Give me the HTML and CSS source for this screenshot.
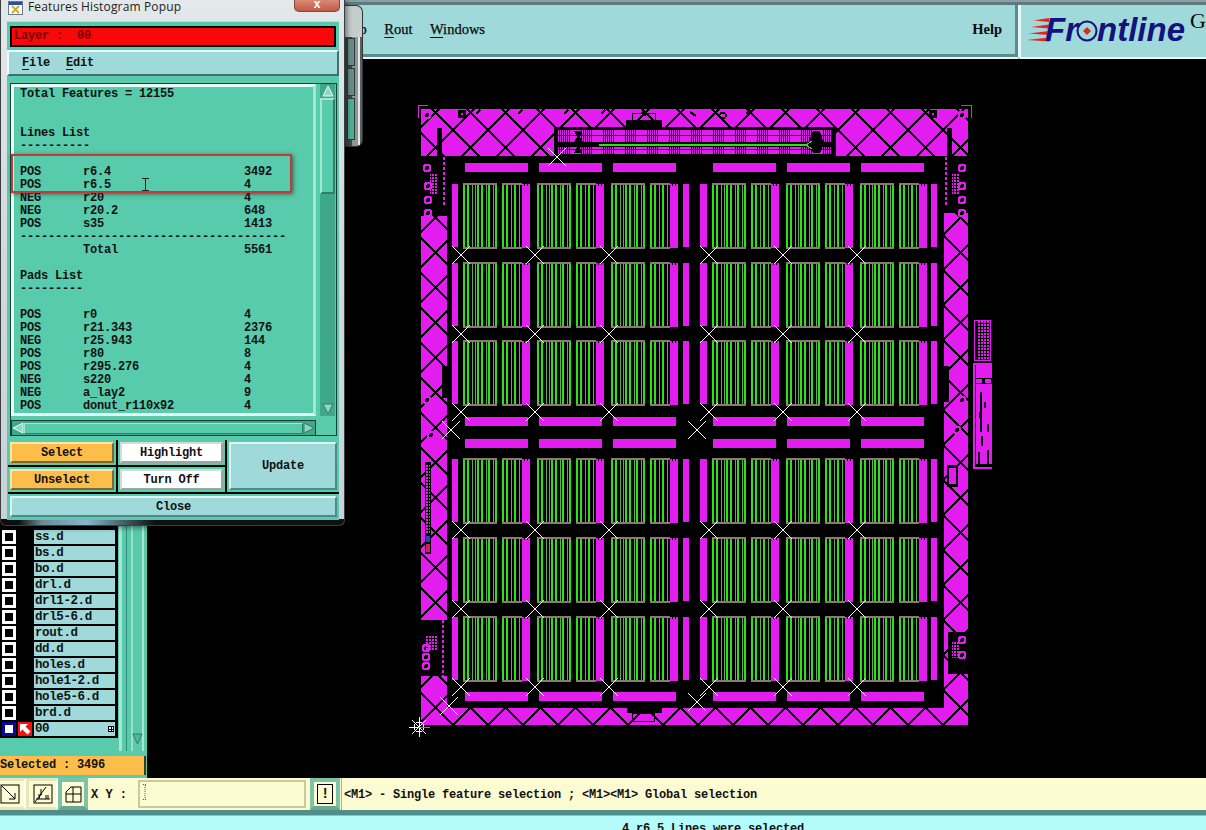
FILE: index.html
```html
<!DOCTYPE html>
<html lang="en">
<head>
<meta charset="utf-8">
<title>Features Histogram Popup</title>
<link rel="stylesheet" href="styles.css">
</head>
<body>
<div class="screen">
  <header class="top">
    <nav class="menu">
      <span class="menu-item"><u>S</u>tep</span>
      <span class="menu-item"><u>R</u>out</span>
      <span class="menu-item"><u>W</u>indows</span>
      <span class="menu-item help">Help</span>
    </nav>
    <div class="logo">
      <svg class="logo-stripes" width="22" height="24" viewBox="0 0 22 24"><path d="M22 0V4L7 2.500zM22 6.500V10.500L4 9zM22 13V17L2 15.500zM22 19.500V23.500L0 22z"/></svg>
      <span class="logo-word">Fr</span>
      <svg class="logo-o" width="22" height="24" viewBox="0 0 22 24"><circle cx="11" cy="12" r="9.500" fill="none" stroke="#12137c" stroke-width="2"/><path d="M11 8L15 12L11 16L7 12z" fill="#e0251b"/></svg>
      <span class="logo-word">ntline</span>
      <span class="logo-g">G</span>
    </div>
  </header>

  <main class="work">
    <aside class="layers">
      <div class="layer-body">
        <div class="layer-rows">
          <div class="lrow"><i class="chk"></i><b class="arrow-slot"></b><span class="lname">ss.d</span></div>
          <div class="lrow"><i class="chk"></i><b class="arrow-slot"></b><span class="lname">bs.d</span></div>
          <div class="lrow"><i class="chk"></i><b class="arrow-slot"></b><span class="lname">bo.d</span></div>
          <div class="lrow"><i class="chk"></i><b class="arrow-slot"></b><span class="lname">drl.d</span></div>
          <div class="lrow"><i class="chk"></i><b class="arrow-slot"></b><span class="lname">drl1-2.d</span></div>
          <div class="lrow"><i class="chk"></i><b class="arrow-slot"></b><span class="lname">drl5-6.d</span></div>
          <div class="lrow"><i class="chk"></i><b class="arrow-slot"></b><span class="lname">rout.d</span></div>
          <div class="lrow"><i class="chk"></i><b class="arrow-slot"></b><span class="lname">dd.d</span></div>
          <div class="lrow"><i class="chk"></i><b class="arrow-slot"></b><span class="lname">holes.d</span></div>
          <div class="lrow"><i class="chk"></i><b class="arrow-slot"></b><span class="lname">hole1-2.d</span></div>
          <div class="lrow"><i class="chk"></i><b class="arrow-slot"></b><span class="lname">hole5-6.d</span></div>
          <div class="lrow"><i class="chk"></i><b class="arrow-slot"></b><span class="lname">brd.d</span></div>
          <div class="lrow"><i class="chk chk-work"></i><b class="arrow-slot arrow-on"><svg width="14" height="14" viewBox="0 0 14 14"><path d="M2 2H10L7.500 4.500L12.500 9.500L9.500 12.500L4.500 7.500L2 10z" fill="#fff"/></svg></b><span class="lname">00<em class="mini"></em></span></div>
        </div>
        <div class="layer-scroll"><svg class="down" width="11" height="12" viewBox="0 0 11 12"><path d="M1 1H10L5.500 11z" fill="#57b59a" stroke="#2f7f6d"/></svg></div>
      </div>
      <div class="selected">Selected : 3496</div>
    </aside>

    <div class="canvas">
      <svg class="board" width="1059" height="719" viewBox="147 59 1059 719" shape-rendering="crispEdges">
        <defs>
          <pattern id="hatch" patternUnits="userSpaceOnUse" x="488" y="130" width="35" height="35">
            <path d="M0 0L35 35M35 0L0 35" stroke="#000" stroke-width="2"/>
          </pattern>
          <pattern id="comb" patternUnits="userSpaceOnUse" x="558" y="130" width="22" height="24">
            <rect width="22" height="24" fill="#e31df0"/>
            <path d="M1 0V24M3 0V24M5 0V24M7 0V24M9 0V24M11 0V24" stroke="#000" stroke-width="1"/>
            <path d="M0 5H22M0 19H22" stroke="#000" stroke-width="1"/>
          </pattern>
          <pattern id="dots" patternUnits="userSpaceOnUse" width="3" height="3">
            <rect width="2" height="2" fill="#e31df0"/>
          </pattern>
          <g id="cell">
            <path class="lit" d="M1 0V66M5 0V66M15 0V66M19 0V66M26 0V66M33 0V66M40 0V66M44 0V66M52 0V66"/>
            <path class="dim" d="M9.500 0V66M12.500 0V66M23.500 0V66M30.500 0V66M48.500 0V66M56.500 0V66"/>
            <rect class="cap" width="34" height="2"/>
            <rect class="cap" y="64" width="34" height="2"/>
            <rect class="cap" x="39" width="20" height="2"/>
            <rect class="cap" x="39" y="64" width="20" height="2"/>
            <rect class="mag" x="59" y="1" width="8" height="64"/>
            <path d="M61 1V3M64 1V3" stroke="#000"/>
          </g>
          <g id="half">
            <use href="#cell"/>
            <use href="#cell" x="74"/>
            <use href="#cell" x="148"/>
          </g>
          <g id="row">
            <rect class="mag" x="452" y="1" width="6" height="63"/>
            <use href="#half" x="463"/>
            <rect class="mag" x="683" y="1" width="6" height="63"/>
            <rect class="mag" x="700" y="1" width="7" height="63"/>
            <use href="#half" x="712"/>
            <rect class="mag" x="931" y="1" width="6" height="63"/>
          </g>
          <g id="bars">
            <rect class="mag" x="465" width="63" height="8.500"/>
            <rect class="mag" x="539" width="63" height="8.500"/>
            <rect class="mag" x="613" width="63" height="8.500"/>
            <rect class="mag" x="713" width="63" height="8.500"/>
            <rect class="mag" x="787" width="63" height="8.500"/>
            <rect class="mag" x="861" width="63" height="8.500"/>
          </g>
          <path id="x" d="M-9-9L9 9M9-9L-9 9" class="wire"/>
          <g id="xrow">
            <use href="#x" x="461"/><use href="#x" x="535"/><use href="#x" x="609"/>
            <use href="#x" x="709"/><use href="#x" x="783"/><use href="#x" x="857"/>
          </g>
          <g id="blob">
            <circle r="4.500" class="mag"/>
            <circle r="2" fill="#000"/>
          </g>
        </defs>

        <!-- frame -->
        <rect class="mag" x="421" y="109" width="547" height="616"/>
        <rect x="421" y="109" width="547" height="616" fill="url(#hatch)"/>
        <rect x="447" y="156" width="497" height="552" fill="#000"/>
        <rect x="554" y="127" width="282" height="29" fill="#000"/>
        <rect x="626" y="120" width="36" height="7" fill="#000"/>
        <rect x="627" y="708" width="35" height="5" fill="#000"/>
        <rect x="437" y="128" width="5" height="30" fill="#000"/>
        <rect x="947" y="128" width="5" height="30" fill="#000"/>
        <rect x="421" y="156" width="26" height="60" fill="#000"/>
        <rect x="944" y="156" width="24" height="57" fill="#000"/>
        <rect x="421" y="620" width="26" height="56" fill="#000"/>
        <rect x="948" y="632" width="20" height="42" fill="#000"/>
        <rect x="442" y="366" width="5" height="32" fill="#000"/>
        <rect x="944" y="366" width="5" height="36" fill="#000"/>

        <!-- frame details -->
        <path d="M428 105H418V118" class="thin"/>
        <path d="M961 105H971V118" class="thin"/>
        <use href="#blob" x="427" y="115"/>
        <use href="#blob" x="962" y="115"/>
        <rect x="458" y="110" width="8" height="8" fill="#000"/>
        <rect x="461" y="113" width="2" height="2" class="mag"/>
        <rect x="929" y="110" width="8" height="8" fill="#000"/>
        <rect x="932" y="113" width="2" height="2" class="mag"/>
        <path d="M480 110L476 114M522 110L518 114M568 110L564 114M605 110L601 114M642 112L646 116M690 112L696 116M720 115A3 3 0 1 1 720 116M750 110L746 114M788 110L784 114" stroke="#000" stroke-width="2" fill="none"/>
        <use href="#blob" x="427" y="168"/>
        <use href="#blob" x="428" y="186"/>
        <use href="#blob" x="428" y="200"/>
        <use href="#blob" x="428" y="213"/>
        <rect x="430" y="174" width="8" height="20" fill="url(#dots)"/>
        <path d="M444 157V205" class="dash"/>
        <use href="#blob" x="962" y="168"/>
        <use href="#blob" x="962" y="186"/>
        <use href="#blob" x="962" y="200"/>
        <use href="#blob" x="962" y="213"/>
        <rect x="952" y="174" width="8" height="20" fill="url(#dots)"/>
        <path d="M946 157V205" class="dash"/>
        <use href="#blob" x="426" y="648"/>
        <use href="#blob" x="426" y="657"/>
        <use href="#blob" x="426" y="666"/>
        <rect x="426" y="636" width="11" height="14" fill="url(#dots)"/>
        <path d="M443 620V676" class="dash"/>
        <use href="#blob" x="962" y="640"/>
        <use href="#blob" x="962" y="655"/>
        <rect x="952" y="642" width="8" height="16" fill="url(#dots)"/>
        <rect x="425" y="462" width="6" height="92" fill="#000"/>
        <rect x="426" y="464" width="4" height="70" fill="url(#dots)"/>
        <rect x="426" y="536" width="4" height="6" fill="#2a3fd0"/>
        <rect x="426" y="544" width="4" height="8" fill="#d42060"/>
        <use href="#blob" x="427" y="400"/>
        <use href="#blob" x="431" y="435"/>
        <use href="#blob" x="962" y="400"/>
        <use href="#blob" x="957" y="430"/>
        <rect x="947" y="465" width="11" height="22" fill="#000"/>
        <rect x="949" y="468" width="7" height="16" class="mag"/>

        <!-- top connector -->
        <rect x="558" y="130" width="274" height="23.500" fill="url(#comb)"/>
        <rect x="558" y="142" width="274" height="5" fill="#000"/>
        <path d="M574 131H582L580 137L583 142L580 148L582 153H574L577 147L574 142L577 137z" fill="#000"/>
        <path d="M813 131H820L824 144L820 153H813L808 144z" fill="#000"/>
        <rect x="599" y="144" width="207" height="2" class="green"/>
        <path d="M806 145L812 141M806 145L812 149" stroke="#2ee01a"/>
        <rect x="632" y="113" width="23" height="7" fill="none" stroke="#000"/>
        <rect x="632" y="713" width="22" height="8" fill="none" stroke="#000"/>

        <!-- pad bars -->
        <use href="#bars" y="163"/>
        <use href="#bars" y="417"/>
        <use href="#bars" y="439"/>
        <use href="#bars" y="692"/>

        <!-- trace rows -->
        <use href="#row" y="183"/>
        <use href="#row" y="262"/>
        <use href="#row" y="340"/>
        <use href="#row" y="458"/>
        <use href="#row" y="537"/>
        <use href="#row" y="616"/>

        <!-- fiducial crosses -->
        <use href="#xrow" y="255"/>
        <use href="#xrow" y="334"/>
        <use href="#xrow" y="412"/>
        <use href="#xrow" y="530"/>
        <use href="#xrow" y="609"/>
        <use href="#xrow" y="687"/>
        <use href="#x" x="557" y="157"/>
        <use href="#x" x="451" y="430"/>
        <use href="#x" x="697" y="430"/>
        <use href="#x" x="449" y="706"/>
        <use href="#x" x="697" y="702"/>

        <!-- origin star -->
        <g transform="translate(419 727)">
          <path d="M-10 0H10M0-10V10M-7-7L7 7M7-7L-7 7" class="wire"/>
          <circle r="5" fill="none" class="wire"/>
          <path d="M0 0H11" stroke="#58a84c" stroke-width="1"/>
        </g>

        <!-- side coupons -->
        <rect x="974" y="320" width="16" height="40" fill="none" class="thin"/>
        <rect x="977" y="320" width="12" height="40" fill="url(#dots)"/>
        <rect x="973" y="363" width="19" height="106" class="mag"/>
        <rect x="975" y="365" width="17" height="102" fill="#000"/>
        <rect x="976" y="365" width="16" height="13" class="mag"/>
        <rect x="976" y="379" width="6" height="4" class="mag"/>
        <rect x="985" y="379" width="6" height="4" class="mag"/>
        <rect x="976" y="384" width="16" height="80" class="mag"/>
        <path d="M981 392V432M985 402V408M980 412V418M988 424V432M982 436V446M988 450V464M979 452V464" stroke="#000" stroke-width="2"/>
      </svg>
    </div>
  </main>

  <footer class="bottom">
    <div class="bar">
      <div class="tool tool-flat"><svg width="20" height="20" viewBox="0 0 20 20"><rect x="1" y="1" width="18" height="18" fill="none" stroke="#000"/><path d="M1 1L15 15M15 9V15H9" fill="none" stroke="#000"/></svg></div>
      <div class="tool tool-flat tool-wide"><svg width="20" height="20" viewBox="0 0 20 20"><rect x="1" y="1" width="18" height="18" fill="none" stroke="#000"/><path d="M2 18L13 3M3 15H17M6 15A5 5 0 0 1 9 10M8 5V11H5M12 12H16M12 14H16" fill="none" stroke="#000"/></svg></div>
      <div class="tool tool-green"><svg width="17" height="17" viewBox="0 0 17 17"><path d="M1 6L6 1H16V16H1zM8 1V16M1 8H16" fill="none" stroke="#000"/></svg></div>
      <label class="xy">X Y :</label>
      <div class="xy-input"><svg class="caret" width="5" height="16" viewBox="0 0 5 16"><path d="M0 .5H4M2 1V15M0 15.500H4" stroke="#555" stroke-dasharray="1 1" fill="none"/></svg></div>
      <div class="tool tool-green tool-bang"><span class="bang">!</span></div>
      <div class="hint">&lt;M1&gt; - Single feature selection ; &lt;M1&gt;&lt;M1&gt; Global selection</div>
    </div>
    <div class="status">4 r6.5 Lines were selected</div>
  </footer>

  <!-- window partly hidden behind the popup -->
  <div class="back-win">
    <div class="back-cells">
      <span class="back-cell"></span>
      <span class="back-cell"></span>
      <span class="back-cell back-cell-g"></span>
    </div>
  </div>

  <!-- popup window -->
  <section class="popup">
    <div class="title">
      <svg class="title-icon" width="15" height="14" viewBox="0 0 15 14"><rect x=".5" y=".5" width="14" height="13" fill="#fff" stroke="#6a7a8a"/><rect x="1" y="1" width="13" height="3" fill="#2a4fa0"/><path d="M4 5L11 12M11 5L4 12" stroke="#c8b020" stroke-width="2"/></svg>
      <span class="title-text">Features Histogram Popup</span>
      <span class="close-x">x</span>
    </div>
    <div class="pop-body">
      <div class="layer-bar">Layer :  00</div>
      <div class="pop-menu"><span><u>F</u>ile</span><span><u>E</u>dit</span></div>
      <div class="list-wrap">
        <div class="list-box">
<pre class="list-text">Total Features = 12155


Lines List
----------

POS      r6.4                   3492
POS      r6.5                   4
NEG      r20                    4
NEG      r20.2                  648
POS      s35                    1413
--------------------------------------
         Total                  5561

Pads List
---------

POS      r0                     4
POS      r21.343                2376
NEG      r25.943                144
POS      r80                    8
POS      r295.276               4
NEG      s220                   4
NEG      a_lay2                 9
POS      donut_r110x92          4</pre>
        </div>
        <div class="vscroll">
          <svg class="sb-arrow" width="12" height="12" viewBox="0 0 12 12"><path d="M6 1L11 11H1z" fill="#8fd5c5" stroke="#e8fff8"/></svg>
          <div class="sb-thumb"></div>
          <div class="sb-trough"></div>
          <svg class="sb-arrow" width="12" height="12" viewBox="0 0 12 12"><path d="M1 1H11L6 11z" fill="#8fd5c5" stroke="#2f7f6d"/></svg>
        </div>
        <div class="hscroll">
          <svg class="sb-arrow" width="12" height="12" viewBox="0 0 12 12"><path d="M1 6L11 1V11z" fill="#8fd5c5" stroke="#e8fff8"/></svg>
          <div class="sb-thumb-h"></div>
          <svg class="sb-arrow" width="12" height="12" viewBox="0 0 12 12"><path d="M1 1L11 6L1 11z" fill="#8fd5c5" stroke="#2f7f6d"/></svg>
        </div>
      </div>
      <div class="actions">
        <div class="act"><button class="btn btn-orange">Select</button></div>
        <div class="act"><button class="btn btn-white">Highlight</button></div>
        <div class="act act-update"><button class="btn btn-teal">Update</button></div>
        <div class="act"><button class="btn btn-orange">Unselect</button></div>
        <div class="act"><button class="btn btn-white">Turn Off</button></div>
        <div class="act act-close"><button class="btn btn-teal">Close</button></div>
      </div>
    </div>
    <div class="callout"></div>
    <svg class="ibeam" width="7" height="13" viewBox="0 0 7 13"><path d="M0 .5H7M3.500 0V13M0 12.500H7" stroke="#222" fill="none"/></svg>
  </section>
</div>
</body>
</html>
```
FILE: styles.css
```css
* { box-sizing: border-box; }
html, body { margin: 0; padding: 0; background: #000; }
.screen {
  position: relative;
  width: 1206px;
  height: 830px;
  overflow: hidden;
  display: flex;
  flex-direction: column;
  background: #000;
  font-family: "Liberation Mono", monospace;
  font-size: 12px;
  font-weight: 700;
  letter-spacing: -.2px;
  color: #111;
}
u { text-underline-offset: 3px; }

/* top */
.top {
  height: 59px;
  flex: none;
  display: flex;
  background: linear-gradient(#8a9ea8 0 2px, #5f7a7a 2px 5px, #9fd9da 5px);
}
.menu {
  width: 1018px;
  margin-top: 5px;
  height: 52px;
  padding: 0 13px 0 341px;
  display: flex;
  align-items: center;
  gap: 17.500px;
  background: #9fd9da;
  border-bottom: 3px solid #5c8b8d;
  border-right: 3px solid #5c8b8d;
  box-shadow: 0 2px 0 #e8f7f7, 2px 0 0 #e8f7f7;
  font-family: "Liberation Serif", serif;
  font-size: 14.500px;
  font-weight: 400;
  letter-spacing: 0;
  color: #0a0a0a;
  -webkit-text-stroke: .25px #0a0a0a;
}
.help { margin-left: auto; font-weight: 700; -webkit-text-stroke: 0; }
.logo {
  flex: 1;
  margin: 5px 0 0 2px;
  height: 54px;
  padding: 0 0 0 6px;
  display: flex;
  align-items: center;
  overflow: hidden;
  background: #9fd9da;
  border-bottom: 2px solid #e8f7f7;
  border-left: 1px solid #e8f7f7;
}
.logo-stripes { fill: #e0251b; margin: -3px -4px 0 0; flex: none; }
.logo-word {
  flex: none;
  font-family: "Liberation Sans", sans-serif;
  font-style: italic;
  font-weight: 700;
  font-size: 33px;
  letter-spacing: 0;
  line-height: 1;
  color: #12137c;
  margin-top: -3px;
}
.logo-o { margin: 0 -1px 0 -2px; flex: none; }
.logo-g {
  align-self: flex-start;
  flex: none;
  margin: 3px 0 0 5px;
  font-family: "Liberation Serif", serif;
  font-weight: 400;
  font-size: 22px;
  letter-spacing: 0;
  line-height: 26px;
  color: #0a0a0a;
}

/* work area */
.work { height: 719px; flex: none; display: flex; }
.canvas { flex: 1; background: #000; min-width: 0; }
.board { display: block; }
.mag { fill: #e31df0; }
.green { fill: #2ee01a; }
.lit { stroke: #2ee01a; stroke-width: 2; fill: none; }
.dim { stroke: #5aae4e; stroke-width: 1; fill: none; }
.cap { fill: #8a7a72; }
.wire { stroke: #fff; stroke-width: 1; fill: none; }
.thin { stroke: #e31df0; stroke-width: 1; fill: none; }
.dash { stroke: #e31df0; stroke-width: 2; stroke-dasharray: 3 2; fill: none; }

/* layer panel */
.layers {
  width: 147px;
  flex: none;
  display: flex;
  flex-direction: column;
  justify-content: flex-end;
  background: #57cbab;
  padding-bottom: 3px;
}
.layer-body { flex: 1; display: flex; min-height: 0; }
.layer-rows {
  width: 118px;
  flex: none;
  padding: 470px 2px 15px 2px;
  display: flex;
  flex-direction: column;
  gap: 2px;
  justify-content: flex-end;
  background: #000;
  box-shadow: inset 0 -13px 0 #57cbab;
}
.lrow { height: 14px; display: flex; gap: 2px; flex: none; }
.chk {
  width: 14px; height: 14px;
  flex: none;
  background: #000;
  border: 3px solid #fff;
}
.chk-work { background: #fff; border-color: #0a0a9a; }
.arrow-slot { width: 14px; height: 14px; flex: none; display: block; }
.arrow-on { background: #f01515; }
.arrow-on svg { display: block; }
.lname {
  position: relative;
  width: 81px;
  flex: none;
  padding-left: 1px;
  background: #9fd9da;
  line-height: 14px;
  font-size: 12.500px;
  letter-spacing: -.4px;
}
.mini {
  position: absolute;
  right: 1px; top: 4px;
  width: 6px; height: 6px;
  border: 1px solid #000;
  background: linear-gradient(#000,#000) center/100% 1px no-repeat, linear-gradient(#000,#000) center/1px 100% no-repeat, #fff;
}
.layer-scroll {
  flex: 1;
  position: relative;
  background: linear-gradient(90deg, #57cbab 0 1px, #a8e6d2 1px 4px, #57cbab 4px 8px, #2f8f78 8px 9px, #57cbab 9px 13px, #9fdcca 13px 15px, #57cbab 15px 24px, #a8e6d2 24px 26px, #57cbab 26px);
}
.down { position: absolute; left: 14px; bottom: 6px; }
.selected {
  height: 19px;
  width: 146px;
  margin-top: 5px;
  background: #fdbd4a;
  border-right: 2px solid #3a3a20;
  line-height: 19px;
  font-size: 12px;
  letter-spacing: -.2px;
}

/* bottom */
.bottom { flex: 1; display: flex; flex-direction: column; }
.bar {
  height: 37px;
  flex: none;
  display: flex;
  background: #fdfbd2;
  border-bottom: 5px solid #4f8e8c;
}
.tool { height: 32px; display: flex; align-items: center; justify-content: center; flex: none; }
.tool-flat {
  width: 26px;
  background: #fdfbd2;
  border: 3px solid #e6e6b8;
  border-left: 0;
  border-right: 2px solid #fff;
}
.tool-flat svg { margin-left: -4px; }
.tool-wide { width: 32px; border-left: 3px solid #e6e6b8; }
.tool-wide svg { margin-left: 0; }
.tool-green {
  width: 30px;
  background: #fdfbd2;
  border: 4px solid #7cc4a8;
  border-bottom-color: #6aa78f;
}
.xy { width: 48px; flex: none; padding: 1px 0 0 3px; line-height: 32px; letter-spacing: 0; white-space: nowrap; }
.xy-input {
  width: 172px;
  flex: none;
  height: 32px;
  border: 3px solid #fdfbd2;
  border-left-width: 1px;
  outline: 2px solid #c9c99a;
  outline-offset: -4px;
  padding: 3px 0 0 6px;
}
.caret { display: block; }
.tool-bang { width: 30px; margin-left: 2px; }
.bang {
  width: 16px; height: 20px;
  border: 1px solid #000;
  text-align: center;
  font-size: 14px;
  line-height: 18px;
}
.hint {
  flex: 1;
  padding: 1px 0 0 2px;
  line-height: 32px;
  border-left: 1px solid #7cc4a8;
  margin-left: 1px;
  white-space: nowrap;
}
.status {
  flex: 1;
  padding: 6px 0 0 622px;
  background: #b4fbfb;
  line-height: 14px;
  border-top: 1px solid #7fc8c4;
  white-space: nowrap;
}

/* window behind popup */
.back-win {
  position: absolute;
  left: 300px; top: 5px;
  width: 63px; height: 142px;
  border: 1px solid #333;
  border-left: 0;
  border-radius: 0 7px 7px 0;
  background:
    linear-gradient(#c4cccc 0 31px, transparent 31px),
    linear-gradient(90deg, #3b4a4a 0 52px, #8f9696 52px 58px, #e4e8e8 58px 60px, #5a6060 60px);
  padding: 32px 0 0 47px;
}
.back-cells { width: 8px; display: flex; flex-direction: column; gap: 2px; }
.back-cell { height: 28px; background: #6b8d88; border: 1px solid #2a3a3a; }
.back-cell-g { height: 42px; background: #4fb094; }

/* popup */
.popup {
  position: absolute;
  left: 0; top: 0;
  width: 345px; height: 526px;
  padding: 0 5px 6px 6px;
  border-radius: 0 0 6px 6px;
  border: 1px solid #3a3f42;
  border-top: 0;
  background:
    linear-gradient(90deg, #0d0d0d 0 5%, #6f8a97 12%, #8ab4d0 25%, #475a66 36%, #101010 45%, #111) bottom/100% 6px no-repeat,
    linear-gradient(#e3e9ea, #d3dade 45%, #c8d2d6);
  box-shadow: 0 0 7px rgba(0,0,0,.75);
}
.title { height: 21px; position: relative; }
.title-icon { position: absolute; left: 1px; top: 1px; }
.title-text {
  position: absolute;
  left: 21px; top: 0;
  font-family: "Open Sans", sans-serif;
  font-size: 12px;
  font-weight: 400;
  letter-spacing: .15px;
  line-height: 14px;
  color: #222;
  white-space: nowrap;
}
.close-x {
  position: absolute;
  left: 287px; top: 0;
  width: 46px; height: 12px;
  border: 1px solid #7a4a40;
  border-top: 0;
  border-radius: 0 0 5px 5px;
  background: linear-gradient(#d88a78, #c05a45);
  color: #fff;
  font-family: "Liberation Sans", sans-serif;
  font-size: 12px;
  line-height: 9px;
  text-align: center;
}
.pop-body {
  height: 499px;
  padding-top: 4px;
  background: #57cbab;
  border-top: 1px solid #a8e6d2;
}
.layer-bar {
  height: 21px;
  margin: 0 3px;
  border: 2px solid #000;
  background: #f80808;
  color: #7a0000;
  padding-left: 2px;
  line-height: 16px;
  white-space: pre;
}
.pop-menu {
  height: 26px;
  margin-top: 3px;
  display: flex;
  gap: 16px;
  padding-left: 13px;
  align-items: center;
  background: #9fd9da;
  border: 2px solid;
  border-color: #eefafa #3f6f6f #3f6f6f #eefafa;
}
.list-wrap {
  margin: 7px 2px 0 3px;
  height: 353px;
  display: grid;
  grid-template-columns: 305px 1fr;
  grid-template-rows: 332px 1fr;
  background: #57cbab;
  border: 1px solid #1c3c36;
}
.list-box {
  border: 3px solid #e4faf4;
  border-right-color: #a8e6d2;
  overflow: hidden;
  padding: 1px 0 0 6px;
  background: #57cbab;
}
.list-text {
  margin: 0;
  font: inherit;
  letter-spacing: inherit;
  line-height: 13px;
  white-space: pre;
}
.vscroll {
  margin: 0 1px 0 4px;
  display: flex;
  flex-direction: column;
  align-items: stretch;
  background: #3fa78c;
}
.sb-arrow { display: block; flex: none; margin: 1px auto; }
.sb-thumb { height: 96px; background: #57cbab; border: 2px solid #a8e6d2; border-right-color: #2f7f6d; border-bottom-color: #2f7f6d; }
.sb-trough { flex: 1; }
.hscroll {
  margin: 4px 0 0;
  display: flex;
  align-items: center;
  background: #3fa78c;
  border: 1px solid #1c3c36;
}
.sb-thumb-h { flex: 1; height: 11px; background: #57cbab; border: 1px solid #a8e6d2; border-right-color: #2f7f6d; border-bottom-color: #2f7f6d; }
.actions {
  margin: 4px 0 0 1px;
  display: grid;
  grid-template-columns: 108px 107px 1fr;
  grid-template-rows: 25px 25px 25px;
  gap: 2px;
  background: #000;
}
.act { background: #57cbab; padding: 2px; display: flex; }
.act-update { grid-column: 3; grid-row: 1 / span 2; }
.act-close { grid-column: 1 / -1; grid-row: 3; }
.btn {
  flex: 1;
  padding: 0;
  font: inherit;
  letter-spacing: inherit;
  color: #111;
  border: 2px solid;
}
.btn-orange { background: #fdbd4a; border-color: #ffe6a8 #7a6a30 #7a6a30 #ffe6a8; }
.btn-white { background: #fff; border-color: #d4dcd8 #9aa8a4 #9aa8a4 #d4dcd8; }
.btn-teal { background: #9fd9da; border-color: #dff5f5 #4f8a8a #4f8a8a #dff5f5; }

.callout {
  position: absolute;
  left: 10px; top: 154px;
  width: 281px; height: 39px;
  border: 2px solid #c23a3a;
  box-shadow: 1px 1px 4px rgba(60,30,30,.7);
}
.ibeam { position: absolute; left: 141px; top: 178px; }
```
